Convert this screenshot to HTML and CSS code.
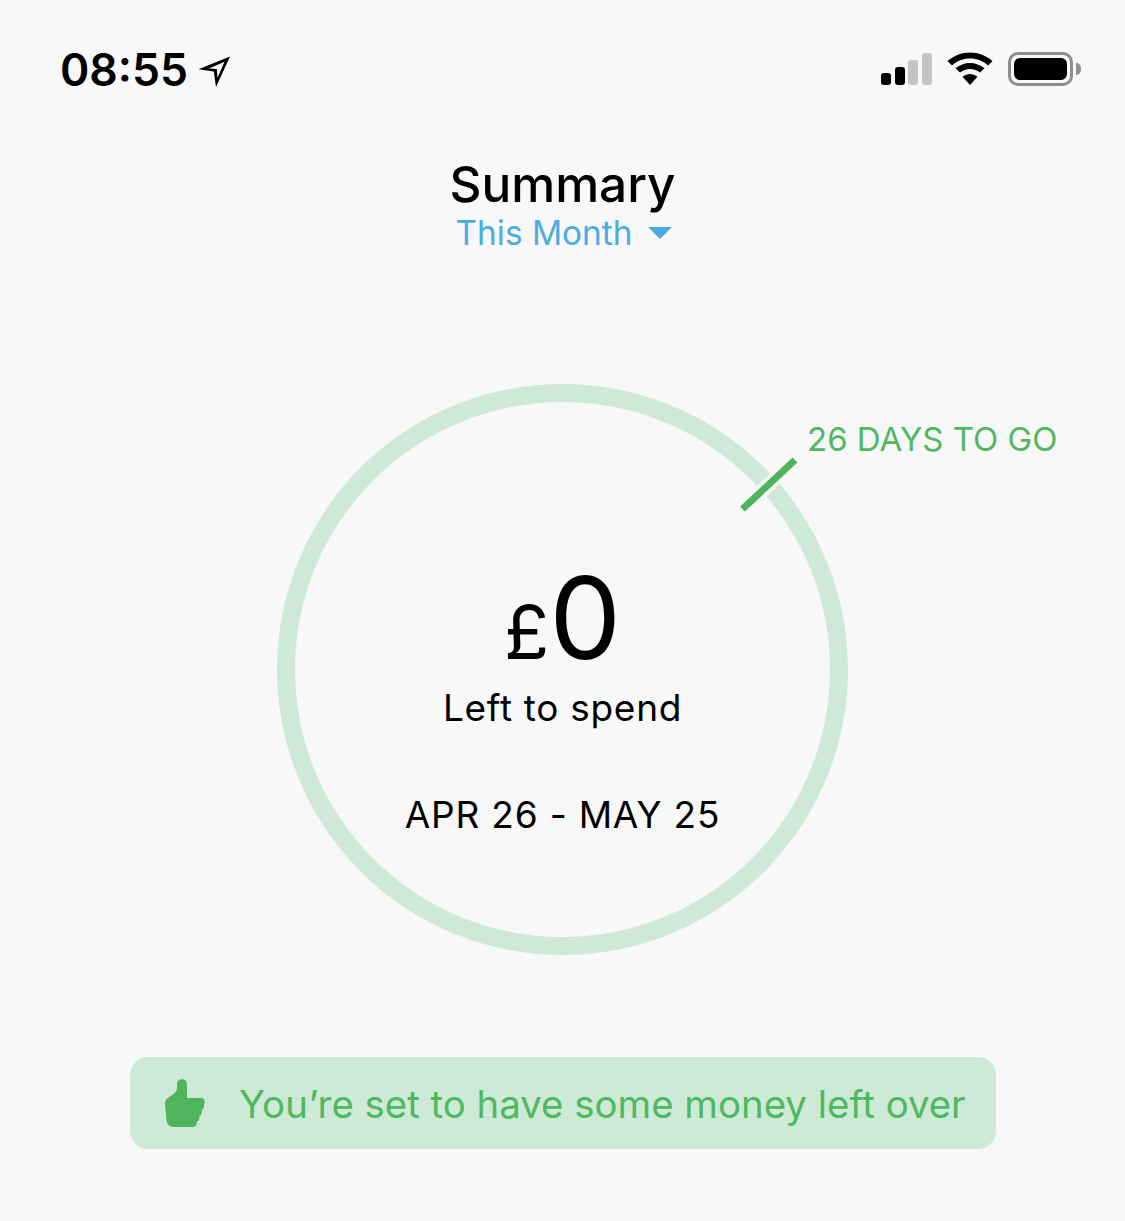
FILE: index.html
```html
<!DOCTYPE html>
<html>
<head>
    <meta charset="UTF-8">
    <meta name="viewport" content="width=device-width, initial-scale=1.0">
    <title>Summary</title>
    <link rel="stylesheet" href="styles.css">
</head>
<body>
    <div class="status-bar">
        <div class="status-left">
            <span class="clock">08:55</span>
            <svg class="location-icon" width="34" height="34" viewBox="0 0 34 34">
                <path d="M0.500 16.300 L32 3.500 L18 34 L15.800 18.500 Z M11 15.500 L18.800 16 L19.500 25 L26.500 8.700 Z" fill="#000" fill-rule="evenodd"/>
            </svg>
        </div>
        <div class="status-right">
            <div class="signal">
                <span class="signal-bar bar-1"></span>
                <span class="signal-bar bar-2"></span>
                <span class="signal-bar bar-3 off"></span>
                <span class="signal-bar bar-4 off"></span>
            </div>
            <svg class="wifi-icon" width="46" height="34" viewBox="0 0 46 34">
                <path d="M23 0.500 C14.500 0.500 7 3.600 0.500 9 L5 13.400 C10 9 16 6.600 23 6.600 C30 6.600 36 9 41 13.400 L45.500 9 C39 3.600 31.500 0.500 23 0.500 Z" fill="#000"/>
                <path d="M23 11 C17.500 11 13 13 8.500 16.200 L13 20.600 C16 18.400 19 17 23 17 C27 17 30 18.400 33 20.600 L37.500 16.200 C33 13 28.500 11 23 11 Z" fill="#000"/>
                <path d="M23 22 C20.500 22 18.500 22.800 15.500 24.800 L23 33 L30.500 24.800 C27.500 22.800 25.500 22 23 22 Z" fill="#000"/>
            </svg>
            <div class="battery">
                <div class="battery-body"><div class="battery-fill"></div></div>
                <div class="battery-cap"></div>
            </div>
        </div>
    </div>

    <div class="header">
        <div class="title">Summary</div>
        <div class="period">
            <span>This Month</span>
            <span class="period-arrow"></span>
        </div>
    </div>

    <div class="dial">
        <svg class="dial-ring" width="571" height="571" viewBox="0 0 571 571">
            <circle cx="285.500" cy="285.500" r="276.500" fill="none" stroke="#cfe9d9" stroke-width="18"/>
            <line x1="465.500" y1="125" x2="518" y2="76" stroke="#f8f8f8" stroke-width="14"/>
            <line x1="465.500" y1="125" x2="518" y2="76" stroke="#4fb45c" stroke-width="7"/>
        </svg>
        <div class="days-left">26 DAYS TO GO</div>
        <div class="amount"><span class="currency">£</span>0</div>
        <div class="amount-label">Left to spend</div>
        <div class="date-range">APR 26 - MAY 25</div>
    </div>

    <div class="notice">
        <svg class="thumb-icon" width="42" height="50" viewBox="0 0 42 50">
            <path d="M13 11 L13 6 C13 -0.500 23 -0.500 23 6 L23 20 L37 20 C40.500 20 41.500 23 40 26.500 C40.500 29 39.500 31 37.500 32 C38.500 35 37 37 35.500 38 C36 41 34.500 43 33 43.500 C33 46.500 31.500 49 29 49 L10 49 C5 49 3 46 2.500 42 L1 26 C1 22 3 20.500 6 18.500 C9 16.500 12 14 13 11 Z" fill="#4fb45c"/>
        </svg>
        <span class="notice-text">You’re set to have some money left over</span>
    </div>
</body>
</html>
```

FILE: styles.css
```css
body {
    margin: 0;
    font-family: Inter, "Liberation Sans", sans-serif;
    background-color: #f8f8f8;
    color: black;
}
.status-bar {
    display: flex;
    justify-content: space-between;
    align-items: center;
    height: 70px;
    padding: 34px 44px 0 60px;
}
.status-left {
    display: flex;
    align-items: center;
    gap: 10px;
    margin-top: 2px;
}
.clock {
    font-size: 44.500px;
    font-weight: 600;
    line-height: 70px;
}
.status-right {
    display: flex;
    align-items: center;
    gap: 15px;
}
.signal {
    display: flex;
    align-items: flex-end;
    gap: 3.700px;
    height: 32px;
}
.signal-bar {
    width: 10px;
    background: black;
    border-radius: 3px;
}
.signal-bar.off {
    background: #c4c4c4;
}
.bar-1 { height: 12px; }
.bar-2 { height: 18px; }
.bar-3 { height: 25px; }
.bar-4 { height: 32px; }
.battery {
    display: flex;
    align-items: center;
    gap: 3px;
}
.battery-body {
    width: 65px;
    height: 34px;
    box-sizing: border-box;
    padding: 3px;
    border: 3px solid #8e8e8e;
    border-radius: 10px;
}
.battery-fill {
    height: 100%;
    background: black;
    border-radius: 6px;
}
.battery-cap {
    width: 5px;
    height: 12px;
    background: #8e8e8e;
    border-radius: 0 5px 5px 0;
}
.header {
    margin-top: 52px;
    text-align: center;
}
.title {
    font-size: 49.500px;
    font-weight: 500;
    line-height: 56px;
}
.period {
    display: flex;
    justify-content: center;
    align-items: center;
    gap: 16px;
    padding-left: 3px;
    color: #4aade2;
    font-size: 33.400px;
    line-height: 42px;
}
.period-arrow {
    width: 0;
    height: 0;
    border-left: 12px solid transparent;
    border-right: 12px solid transparent;
    border-top: 12px solid #4aade2;
}
.dial {
    position: relative;
    width: 571px;
    height: 571px;
    margin: 130px auto 0;
    box-sizing: border-box;
    padding-top: 176px;
    text-align: center;
}
.dial-ring {
    position: absolute;
    top: 0;
    left: 0;
}
.days-left {
    position: absolute;
    top: 35px;
    left: 530px;
    white-space: nowrap;
    color: #4fb860;
    font-size: 33px;
    line-height: 40px;
}
.amount {
    position: relative;
    font-size: 114px;
    line-height: 116px;
}
.currency {
    font-size: 74px;
}
.amount-label {
    position: relative;
    margin-top: -4px;
    font-size: 37px;
    letter-spacing: 0.700px;
    line-height: 44px;
}
.date-range {
    position: relative;
    margin-top: 63px;
    font-size: 37px;
    letter-spacing: 0.800px;
    line-height: 44px;
}
.notice {
    display: flex;
    align-items: center;
    gap: 33px;
    width: 866px;
    height: 92px;
    box-sizing: border-box;
    margin: 102px 0 0 130px;
    padding-left: 34px;
    background: #cdead7;
    border-radius: 18px;
}
.notice-text {
    margin-top: 2px;
    color: #4fb860;
    font-size: 38.400px;
}
```
